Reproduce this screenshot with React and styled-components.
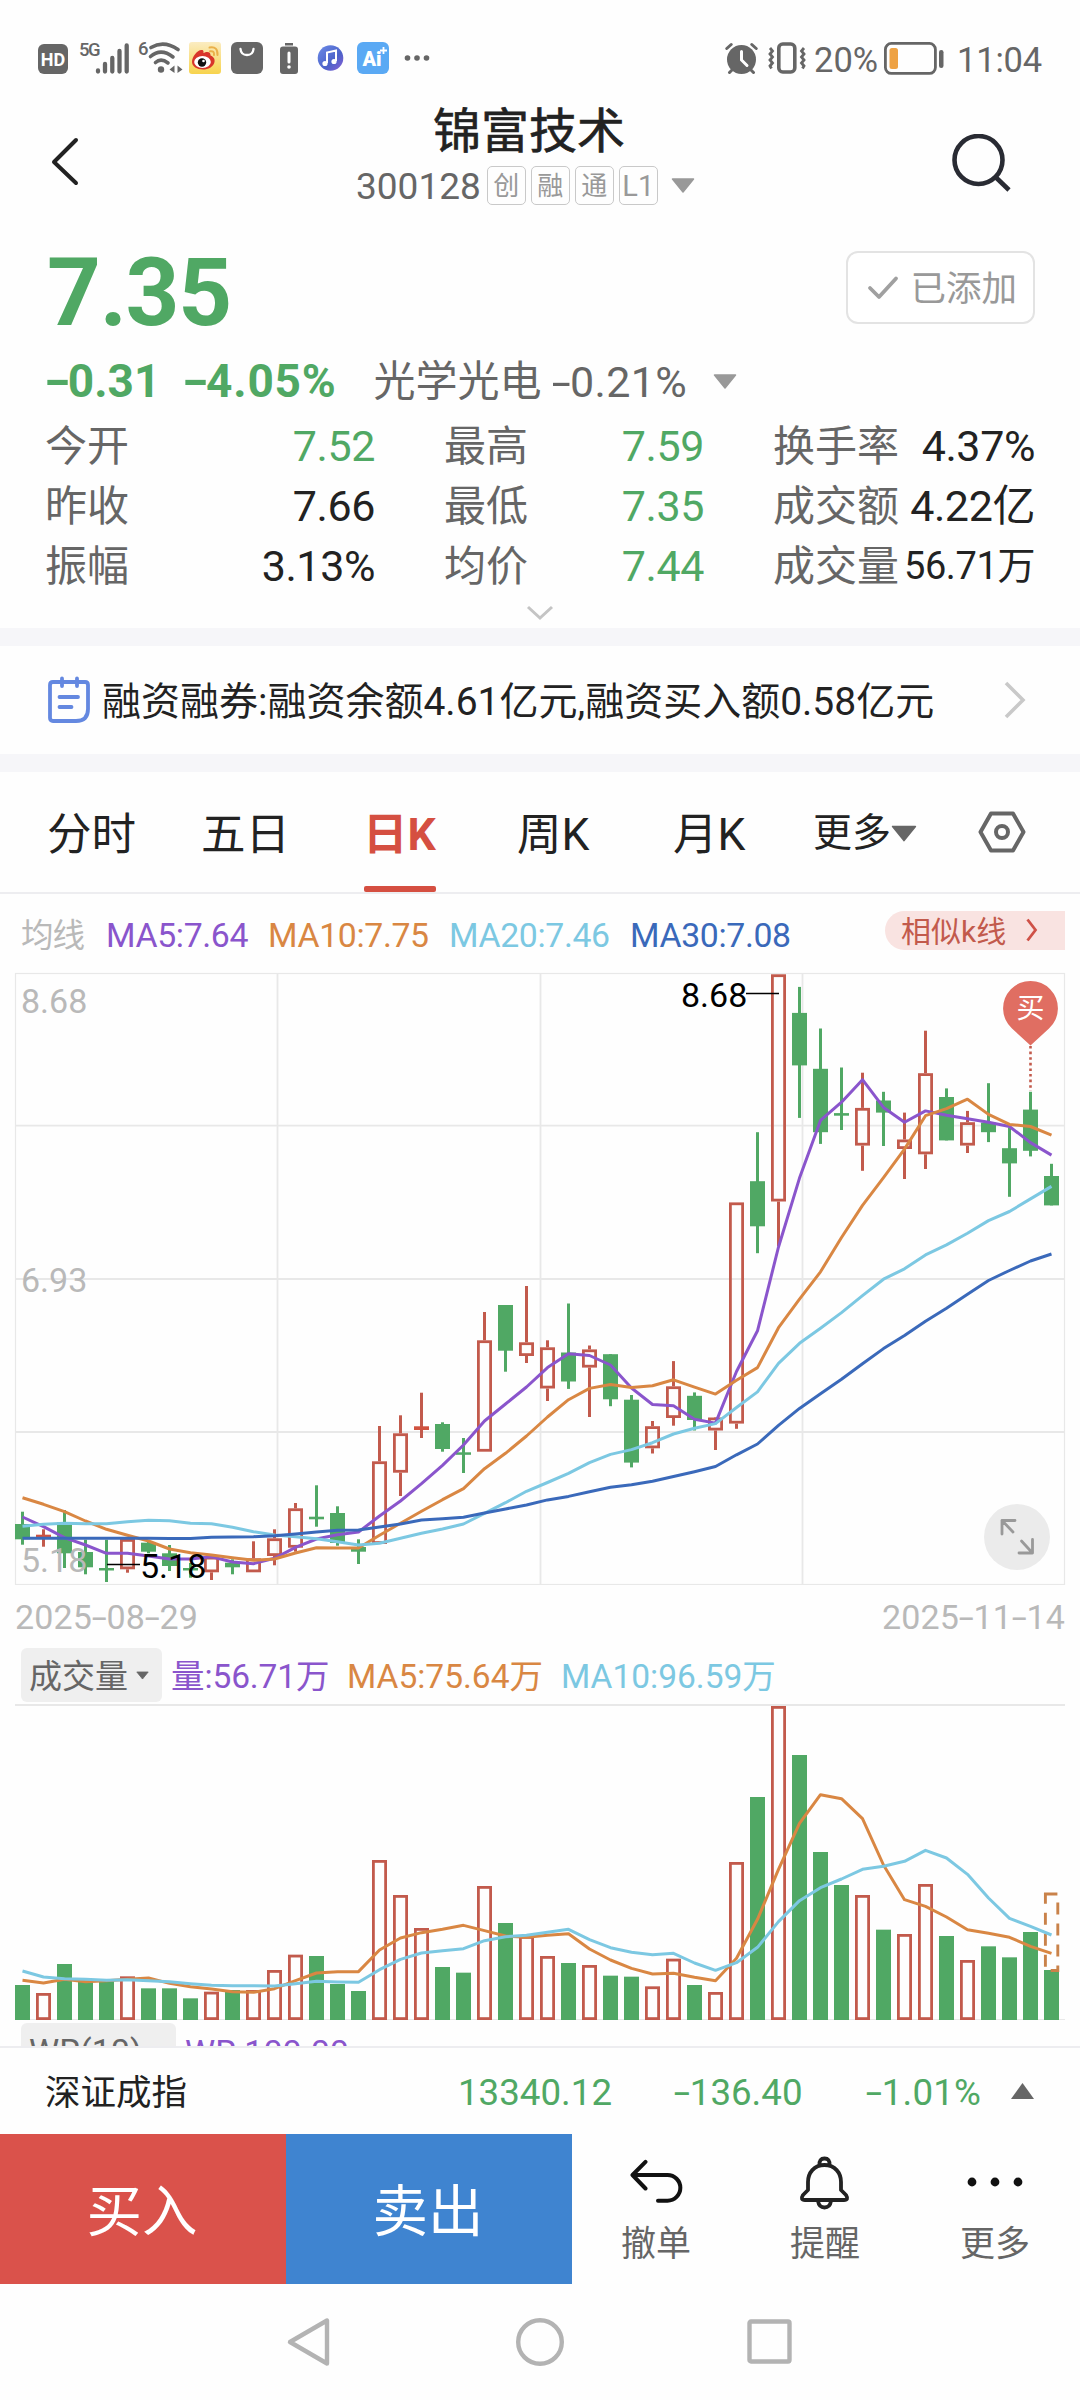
import React from "react";
import styled, { createGlobalStyle } from "styled-components";

const C = {
  green: "#50a864",
  red: "#c25a4c",
  tabRed: "#d54f41",
  ink: "#222222",
  gray: "#666666",
  light: "#999999",
  pale: "#b9b9b9",
  grid: "#e8e8e8",
  purple: "#8a55cc",
  orange: "#d98743",
  cyan: "#7cc8e2",
  blue: "#3a69ba",
};

const Global = createGlobalStyle`
  * { box-sizing: border-box; }
  body {
    margin: 0;
    background: #fefefe;
    font-family: Roboto, "Noto Sans CJK SC", sans-serif;
  }
  svg { display: block; flex: none; }
`;

const Phone = styled.div`
  width: 1080px;
  height: 2400px;
  display: flex;
  flex-direction: column;
  overflow: hidden;
`;

const Text = styled.span`
  font-size: ${(p) => p.$size}px;
  line-height: 1.2;
  padding-top: ${(p) => p.$pt ?? 3}px;
  color: ${(p) => p.$color || C.ink};
  font-weight: ${(p) => p.$weight || 400};
  letter-spacing: ${(p) => p.$ls || 0}px;
  -webkit-text-stroke: ${(p) => p.$stroke || 0}px;
  white-space: nowrap;
  margin-left: ${(p) => p.$ml || 0}px;
`;

const Dash = styled.span`
  display: inline-block;
  width: 0.43em;
  letter-spacing: 0;
  text-align: center;
  transform: scaleX(1.6);
`;

/* Draws hyphens in numbers and dates as wide, figure-like dashes. */
const Num = ({ children }) =>
  children.split("-").map((part, i) => (
    <React.Fragment key={i}>
      {i > 0 && <Dash>-</Dash>}
      {part}
    </React.Fragment>
  ));

const Gap = styled.span`
  width: ${(p) => p.$w}px;
  flex: none;
`;

/* ---------- status bar ---------- */
const StatusBar = styled.div`
  height: 88px;
  padding: 28px 38px 0 38px;
  display: flex;
  align-items: center;
  justify-content: space-between;
`;
const StatusGroup = styled.div`
  display: flex;
  align-items: center;
  height: 60px;
`;
const Badge = styled.div`
  width: 30px;
  height: 30px;
  margin-top: 2px;
  border-radius: 6px;
  background: ${C.gray};
  color: #fff;
  font-size: 18px;
  font-weight: 700;
  line-height: 31px;
  text-align: center;
`;
const NetLabel = styled.span`
  align-self: flex-start;
  margin: ${(p) => p.$top}px 0 0 ${(p) => p.$ml}px;
  width: ${(p) => p.$w}px;
  font-size: 18.5px;
  line-height: 18px;
  font-weight: 500;
  letter-spacing: -1.5px;
  color: ${C.gray};
`;
const AiBadge = styled.div`
  width: 32px;
  height: 32px;
  margin-left: 13px;
  padding-right: 2px;
  border-radius: 6px;
  background: #5aa9f4;
  color: #fff;
  font-size: 20px;
  font-weight: 900;
  line-height: 34px;
  text-align: center;
  position: relative;
`;
const Spark = styled.svg`
  position: absolute;
  right: 2px;
  top: 5px;
`;

/* ---------- header ---------- */
const Header = styled.header`
  height: 144px;
  display: flex;
  justify-content: space-between;
  padding: 0 68px 0 50px;
`;
const HeaderSide = styled.div`
  width: 112px;
  padding-top: ${(p) => p.$top}px;
  display: flex;
  justify-content: ${(p) => (p.$right ? "flex-end" : "flex-start")};
`;
const HeaderMid = styled.div`
  flex: 1;
  display: flex;
  flex-direction: column;
  padding-top: 12px;
`;
const TitleRow = styled.div`
  height: 61px;
  display: flex;
  align-items: center;
  padding-left: 271px;
`;
const CodeRow = styled.div`
  height: 48px;
  display: flex;
  align-items: center;
  padding-left: 194px;
`;
const Tag = styled.span`
  width: 39px;
  height: 39px;
  margin-right: 5px;
  border: 1.5px solid #c9c9c9;
  border-radius: 5px;
  color: ${C.light};
  font-size: ${(p) => p.$size || 26}px;
  line-height: 39px;
  text-align: center;
`;
const Tags = styled.div`
  display: flex;
  margin: 1px 8px 0 6px;
`;

/* ---------- quote ---------- */
const Quote = styled.section`
  height: 396px;
  padding: 0 45px 0 45px;
`;
const PriceRow = styled.div`
  height: 119px;
  display: flex;
  align-items: center;
  justify-content: space-between;
`;
const AddedButton = styled.button`
  width: 189px;
  height: 73px;
  margin: -8px 0 0;
  padding: 0 16px 0 19px;
  border: 2px solid #e3e3e3;
  border-radius: 12px;
  background: #fff;
  display: flex;
  align-items: center;
  justify-content: space-between;
  font-family: inherit;
`;
const ChangeRow = styled.div`
  height: 60px;
  margin-bottom: 4px;
  display: flex;
  align-items: center;
`;
const Stats = styled.div`
  display: grid;
  grid-template-columns: 330px 260px 262px;
  column-gap: 69px;
  grid-auto-rows: 60px;
`;
const Stat = styled.div`
  display: flex;
  align-items: center;
  justify-content: space-between;
`;
const ExpandRow = styled.div`
  display: flex;
  justify-content: center;
  padding-top: 10px;
`;
const Band = styled.div`
  height: 18px;
  background: #f6f6f9;
`;

/* ---------- notice ---------- */
const Notice = styled.section`
  height: 108px;
  padding: 0 53px 0 47px;
  display: flex;
  align-items: center;
`;
const NoticeText = styled.div`
  flex: 1;
  padding: 4px 0 0 11px;
`;

/* ---------- tabs ---------- */
const Tabs = styled.nav`
  height: 122px;
  padding: 0 54px 0 47px;
  border-bottom: 2px solid #ededf0;
  display: flex;
`;
const Tab = styled.div`
  width: ${(p) => p.$w}px;
  height: 120px;
  display: flex;
  flex-direction: column;
  align-items: flex-start;
  justify-content: space-between;
  padding-top: ${(p) => p.$top || 36}px;
`;
const TabLabel = styled.div`
  display: flex;
  align-items: center;
  line-height: 54px;
  margin-left: ${(p) => (p.$active ? -2 : 0)}px;
  font-size: ${(p) => p.$size || 44.5}px;
  color: ${(p) => (p.$active ? C.tabRed : C.ink)};
  font-weight: ${(p) => (p.$active ? 700 : 400)};
`;
const Underline = styled.div`
  width: 72px;
  height: 6px;
  margin-left: -1px;
  border-radius: 2px;
  background: ${C.tabRed};
`;

/* ---------- legends ---------- */
const Legend = styled.div`
  height: 78px;
  padding: 2px 15px 0 21px;
  display: flex;
  align-items: center;
`;
const LegendItem = styled.span`
  width: ${(p) => p.$w}px;
  font-size: ${(p) => p.$size || 33.5}px;
  letter-spacing: ${(p) => p.$ls || 0}px;
  color: ${(p) => p.$color};
  white-space: nowrap;
  line-height: 40px;
  padding-top: 4px;
`;
const Similar = styled.div`
  width: 180px;
  height: 39px;
  margin: -8px 0 0 auto;
  padding: 0 27px 0 16px;
  border-radius: 20px 0 0 20px;
  background: #f9e3e1;
  display: flex;
  align-items: center;
  justify-content: space-between;
`;
const Dates = styled.div`
  height: 63px;
  padding: 0 15px 0 15px;
  display: flex;
  justify-content: space-between;
  align-items: center;
`;
const VolLegend = styled.div`
  height: 56px;
  padding: 0 21px;
  display: flex;
  align-items: flex-start;
`;
const Selector = styled.div`
  width: ${(p) => p.$w}px;
  height: 54px;
  border-radius: 6px;
  background: #efefef;
  padding-left: 8px;
  display: flex;
  align-items: center;
  gap: 8px;
`;
const VolItems = styled.div`
  height: 54px;
  margin-left: ${(p) => p.$ml}px;
  display: flex;
  align-items: center;
`;
const NextPanel = styled.div`
  height: 25px;
  padding: 2px 21px 0;
  overflow: hidden;
  display: flex;
  align-items: flex-start;
`;

/* ---------- bottom ---------- */
const IndexBar = styled.div`
  height: 88px;
  border-top: 2px solid #ededf0;
  padding: 0 45px;
  display: grid;
  grid-template-columns: 413px 216px 192px 145px 22px;
  align-items: center;
`;
const ActionBar = styled.div`
  height: 150px;
  display: flex;
`;
const Trade = styled.div`
  width: 286px;
  padding-right: 2px;
  background: ${(p) => p.$bg};
  color: #fff;
  font-size: 55.5px;
  line-height: 157px;
  text-align: center;
`;
const Tools = styled.div`
  flex: 1;
  display: grid;
  grid-template-columns: 168px 170px 170px;
`;
const Tool = styled.div`
  display: flex;
  flex-direction: column;
  align-items: center;
  padding-top: 20px;
`;
const ToolIcon = styled.div`
  height: 56px;
  margin-bottom: 11px;
  display: flex;
  align-items: center;
`;
const NavBar = styled.div`
  flex: 1;
  display: flex;
  justify-content: space-between;
  align-items: center;
  padding: 0 287px 0 286px;
`;
const HomeIcon = styled.svg`
  margin-left: 3px;
`;

const ChartText = styled.text`
  font-size: 34px;
  fill: ${(p) => p.$fill};
`;

/* [up?, high, bodyTop, bodyBottom, low] */
const candles = [
  [0, 1511.7, 1524, 1539.3, 1544.7], [1, 1529.3, 1534.7, 1537, 1546.7],
  [0, 1510, 1522.3, 1553.3, 1568], [0, 1539.7, 1552, 1567.3, 1574.3],
  [0, 1539.7, 1568, 1570.5, 1582], [1, 1539, 1539, 1569.3, 1572.7],
  [0, 1541.7, 1542.7, 1551.7, 1553.3], [0, 1545, 1553.3, 1566, 1571],
  [0, 1563, 1568, 1570.5, 1577.7], [1, 1556.7, 1556.7, 1572.3, 1580],
  [0, 1559.3, 1562.7, 1567.3, 1574.3], [1, 1541.3, 1558.3, 1572.3, 1572.3],
  [1, 1529.3, 1538.3, 1556, 1565.3], [1, 1503, 1508.3, 1547.7, 1551.7],
  [0, 1485.3, 1516.7, 1519.3, 1526.7], [0, 1506.3, 1513, 1543, 1545.7],
  [0, 1539.3, 1547, 1551.7, 1564], [1, 1426, 1461.3, 1544, 1544],
  [1, 1415.3, 1433.3, 1472.7, 1496], [1, 1392.7, 1426.3, 1430, 1438],
  [0, 1422.3, 1424, 1449, 1451.7], [0, 1438, 1452.3, 1454.7, 1473],
  [1, 1312, 1340.3, 1451.7, 1451.7], [0, 1305, 1305, 1350.7, 1371.7],
  [1, 1286, 1342.3, 1356, 1363], [1, 1340.3, 1347.3, 1388.5, 1401],
  [0, 1303.5, 1352.5, 1381.5, 1388.9], [1, 1345.5, 1349.4, 1367.6, 1417],
  [0, 1354.2, 1354.2, 1399.3, 1406.2], [0, 1395, 1399.7, 1462.6, 1467.4],
  [1, 1421, 1426.2, 1448.3, 1453.5], [1, 1361.1, 1386.3, 1418, 1425.7],
  [0, 1392.4, 1395.8, 1420, 1430.5], [1, 1417, 1417.5, 1430.5, 1450],
  [1, 1202.4, 1202.4, 1423.6, 1428.8], [0, 1132.2, 1181.2, 1226.3, 1253.2],
  [1, 974.3, 974.3, 1201.5, 1246], [0, 986.9, 1012.9, 1065.4, 1117.9],
  [0, 1028.5, 1068.8, 1132.2, 1143.9], [0, 1067.5, 1113.1, 1115.7, 1130],
  [1, 1072.7, 1107.9, 1145.6, 1170.8], [0, 1091.8, 1100.5, 1112.6, 1146],
  [1, 1112.6, 1139.5, 1149, 1179], [1, 1030.7, 1073.2, 1154.3, 1169],
  [0, 1088.4, 1097, 1140.4, 1140.4], [1, 1110.9, 1122.2, 1145.6, 1153],
  [0, 1083.2, 1122.6, 1132.2, 1142.1], [0, 1127.4, 1148.2, 1163.4, 1196.8],
  [0, 1091.8, 1109.6, 1150.8, 1156.4], [0, 1163.8, 1176, 1205.4, 1205.4],
];

const ma5 = [1517, 1526.7, 1537.7, 1545, 1553.3, 1553.3, 1556, 1559, 1559, 1556.7, 1562, 1563.7, 1558.3, 1547.3, 1539, 1534.7, 1532, 1516, 1501, 1483.7, 1465.3, 1445, 1421, 1404, 1387, 1367.6, 1353.8, 1355.5, 1365, 1388, 1404.5, 1405.8, 1419.2, 1423.1, 1371.5, 1330.8, 1247, 1178.1, 1120.4, 1102.2, 1079.7, 1107.4, 1122.2, 1110.9, 1115.2, 1118.7, 1122.2, 1126.5, 1142.6, 1155.1];
const ma10 = [1497.7, 1504.3, 1511.7, 1521, 1529.3, 1535.3, 1541, 1549, 1552.7, 1555, 1557.7, 1560.3, 1559, 1553, 1547.7, 1548, 1548, 1535.3, 1523.3, 1511.3, 1499.7, 1488.7, 1468.7, 1453.3, 1436, 1417, 1399.7, 1388.4, 1384.5, 1387.6, 1385.8, 1379.8, 1387.1, 1394.1, 1380.2, 1367.6, 1327.7, 1299.1, 1271.8, 1237.5, 1205.4, 1177.7, 1149.1, 1115.7, 1108.7, 1099.2, 1114.4, 1124.4, 1126.5, 1135.2];
const ma20 = [1526.3, 1524.3, 1523.3, 1523.7, 1523.7, 1521.7, 1520.3, 1520.7, 1523.3, 1523.7, 1527.3, 1531.7, 1535, 1536.7, 1538.7, 1541.7, 1545, 1543.3, 1538.3, 1533.3, 1529, 1524, 1513.3, 1502.7, 1491.3, 1482.5, 1473.4, 1462.6, 1454.4, 1449.6, 1442.7, 1434, 1428.3, 1423.6, 1407.5, 1391.9, 1363.3, 1343.3, 1328.2, 1312.6, 1295.6, 1279.2, 1268.8, 1254.9, 1244.9, 1233.2, 1220.6, 1211.5, 1198.9, 1186.4];
const ma30 = [1538.3, 1538.3, 1538.3, 1538.3, 1538.3, 1538.3, 1538.3, 1538.6, 1538.6, 1537.3, 1537, 1536.7, 1535.7, 1534, 1532, 1530.3, 1530, 1527, 1524, 1520, 1518.7, 1517.3, 1513, 1509, 1505, 1499.9, 1496.4, 1491.7, 1487.3, 1484.7, 1481.3, 1476.5, 1471.7, 1466.5, 1454.8, 1444, 1425.3, 1408.4, 1393.7, 1379.3, 1363.7, 1348.6, 1335.5, 1321.2, 1308.2, 1294.3, 1280.5, 1270.5, 1261, 1254];

const volumes = [105, 81, 168, 118, 118, 131, 95, 95, 65, 85, 90, 90, 150, 196, 192, 108, 87, 480, 375, 276, 159, 142, 402, 291, 252, 192, 171, 165, 133, 130, 101, 184, 105, 84, 474, 669, 942, 795, 504, 405, 375, 271, 258, 408, 252, 180, 221, 188, 264, 150];
const vol5 = [119, 111, 122, 115, 118, 122, 126, 110, 100, 93, 85, 83, 94, 118, 141, 145, 145, 210, 246, 262, 272, 284, 268, 252, 248, 254, 259, 213, 180, 155, 138, 140, 128, 118, 185, 302, 452, 590, 676, 664, 604, 465, 361, 341, 309, 271, 260, 248, 221, 200];
const vol10 = [147, 129, 124, 122, 119, 121, 118, 115, 109, 104, 103, 103, 102, 109, 116, 114, 113, 151, 182, 201, 208, 214, 238, 250, 254, 263, 272, 241, 217, 203, 196, 200, 171, 149, 172, 218, 295, 358, 397, 423, 452, 461, 476, 509, 486, 437, 366, 305, 281, 255];

const cx = (i) => 22.5 + i * 21;
const points = (ys, f = (y) => y) => ys.map((y, i) => `${cx(i)},${f(y)}`).join(" ");
const volY = (v) => 2020 - v / 3;

const Line = ({ pts, color }) => (
  <polyline points={pts} fill="none" stroke={color} strokeWidth="3" strokeLinejoin="round" />
);

function Candle({ i, d: [up, hi, top, bot, lo] }) {
  const x = cx(i);
  const h = Math.max(bot - top, 2.5);
  if (!up || h < 6) {
    const fill = up ? "#d0523f" : C.green;
    return (
      <g>
        <line x1={x} x2={x} y1={hi} y2={lo} stroke={up ? C.red : C.green} strokeWidth="3" />
        <rect x={x - 7.5} y={top} width="15" height={h} fill={fill} />
      </g>
    );
  }
  return (
    <g stroke={C.red} fill="none">
      <line x1={x} x2={x} y1={hi} y2={top} strokeWidth="3" />
      <line x1={x} x2={x} y1={bot} y2={lo} strokeWidth="3" />
      <rect x={x - 6.1} y={top + 1.4} width="12.2" height={h - 2.8} strokeWidth="2.8" />
    </g>
  );
}

function PriceChart() {
  return (
    <svg width="1080" height="613" viewBox="0 972 1080 613">
      <g stroke={C.grid} strokeWidth="1.8" fill="none">
        <rect x="15.5" y="973.5" width="1049" height="611" strokeWidth="1.2" />
        {[1125.7, 1279, 1432].map((y) => <line key={y} x1="15" x2="1065" y1={y} y2={y} />)}
        {[277.5, 540.5, 802.5].map((x) => <line key={x} x1={x} x2={x} y1="973" y2="1584" />)}
      </g>
      {candles.map((d, i) => <Candle key={i} i={i} d={d} />)}
      <Line pts={points(ma5)} color={C.purple} />
      <Line pts={points(ma10)} color={C.orange} />
      <Line pts={points(ma20)} color={C.cyan} />
      <Line pts={points(ma30)} color={C.blue} />
      <ChartText x="21" y="1013" $fill={C.pale}>8.68</ChartText>
      <ChartText x="21" y="1292" $fill={C.pale}>6.93</ChartText>
      <ChartText x="21" y="1572" $fill={C.pale}>5.18</ChartText>
      <ChartText x="681" y="1007" $fill="#000">8.68</ChartText>
      <ChartText x="140" y="1578" $fill="#000">5.18</ChartText>
      <line x1="746" x2="779" y1="993.5" y2="993.5" stroke="#000" strokeWidth="1.5" />
      <line x1="107" x2="140" y1="1564.5" y2="1564.5" stroke="#000" strokeWidth="1.5" />
      <line x1="1030.5" x2="1030.5" y1="1046" y2="1091" stroke={C.red} strokeWidth="2.6" strokeDasharray="2.6 3" />
      <path d="M1030.5 1045.5L1012 1028.5A27.4 27.4 0 1 1 1049 1028.5Z" fill="#e06e62" />
      <text x="1030.5" y="1018" fontSize="28" fill="#fff" textAnchor="middle">买</text>
      <circle cx="1017" cy="1537" r="33" fill="#ebebeb" />
      <g stroke={C.light} strokeWidth="2.8" fill="none" strokeLinecap="round" strokeLinejoin="round">
        <path d="M1002 1534V1520.5H1015M1002 1520.5L1013 1532" />
        <path d="M1032.5 1539.5V1553H1019M1032.5 1553L1021.5 1541" />
      </g>
    </svg>
  );
}

function VolumeChart() {
  return (
    <svg width="1080" height="317" viewBox="0 1704 1080 317">
      <rect x="15" y="1704" width="1050" height="2" fill={C.grid} />
      <rect x="15" y="2019" width="1050" height="1" fill={C.grid} />
      {volumes.map((v, i) => {
        const y = volY(v);
        return candles[i][0] ? (
          <rect key={i} x={cx(i) - 6.1} y={y + 1.4} width="12.2" height={2020 - y - 2.8} fill="none" stroke={C.red} strokeWidth="2.8" />
        ) : (
          <rect key={i} x={cx(i) - 7.5} y={y} width="15" height={2020 - y} fill={C.green} />
        );
      })}
      <rect x="1045.4" y="1894" width="12.4" height="76.5" fill="none" stroke="#c9824a" strokeWidth="2.9" strokeDasharray="12 9" />
      <Line pts={points(vol5, volY)} color={C.orange} />
      <Line pts={points(vol10, volY)} color={C.cyan} />
    </svg>
  );
}

const TriDown = ({ w = 24, h = 15, color = C.light }) => (
  <svg width={w} height={h} viewBox="0 0 24 15">
    <path d="M1.5 1H22.5L12 14Z" fill={color} stroke={color} strokeLinejoin="round" strokeWidth="1.5" />
  </svg>
);

const Signal = () => (
  <svg width="36" height="34" viewBox="0 0 36 34">
    <g stroke={C.gray} strokeWidth="4.3" strokeLinecap="round">
      <path d="M3 29.5V30.5M10 23V30.5M17.3 17V30.5M24.5 10V30.5M31.7 4.5V30.5" />
    </g>
  </svg>
);

const Wifi = () => (
  <svg width="36" height="34" viewBox="0 0 36 34">
    <g fill="none" stroke={C.gray} strokeWidth="3.6" strokeLinecap="round">
      <path d="M4 6.5Q17 -1 31 8.5" />
      <path d="M3.5 15.5Q14 6.5 26 16" />
      <path d="M8.5 21.5Q14 16.5 21 22" />
    </g>
    <circle cx="14" cy="28.5" r="3.2" fill={C.gray} />
    <path d="M27.5 24.5V32L22.5 28.5ZM30.5 24.5V32L35.5 28.5Z" fill={C.gray} />
  </svg>
);

const Weibo = () => (
  <svg width="32" height="32" viewBox="0 0 32 32">
    <defs>
      <linearGradient id="wb" x1="0" y1="0" x2="0" y2="1">
        <stop offset="0" stopColor="#fbecc2" />
        <stop offset="1" stopColor="#f7d34c" />
      </linearGradient>
    </defs>
    <rect width="32" height="32" rx="3" fill="url(#wb)" />
    <path d="M3 20C3 15 8 8 12.5 8C15 8 14.5 10 14.5 11C17 9.5 22 9 21.5 13.5C25 15 26 17 25.5 20C24.5 25 19 27.5 14 27.5C8 27.5 3 24.5 3 20Z" fill="#d8352a" />
    <ellipse cx="13.5" cy="20" rx="8.3" ry="6" fill="#fff" />
    <circle cx="13" cy="20.5" r="4.2" fill="#111" />
    <circle cx="14.5" cy="19" r="1.3" fill="#fff" />
    <path d="M20.5 5.5Q29 4 28.5 13M21 9.3Q25.5 8.5 25 13" fill="none" stroke="#eab04a" strokeWidth="2" strokeLinecap="round" />
  </svg>
);

const Bag = () => (
  <svg width="32" height="32" viewBox="0 0 32 32">
    <rect width="32" height="32" rx="6" fill={C.gray} />
    <path d="M9.5 7Q10 13 16 13T22.5 7" fill="none" stroke="#fff" strokeWidth="2.3" strokeLinecap="round" />
  </svg>
);

const LowBattery = () => (
  <svg width="18" height="31" viewBox="0 0 18 31">
    <rect x="5" width="8" height="2.5" fill={C.gray} />
    <rect y="3.5" width="18" height="27.5" rx="3" fill={C.gray} />
    <path d="M9 10V19" stroke="#fff" strokeWidth="3" strokeLinecap="round" />
    <circle cx="9" cy="24" r="1.8" fill="#fff" />
  </svg>
);

const Music = () => (
  <svg width="27" height="28" viewBox="0 0 27 28">
    <defs>
      <linearGradient id="mu" x1="0" y1="0" x2="1" y2="1">
        <stop offset="0" stopColor="#6c8ce8" />
        <stop offset="0.6" stopColor="#4c62c9" />
        <stop offset="1" stopColor="#8b5fd6" />
      </linearGradient>
    </defs>
    <circle cx="13.5" cy="14" r="12.8" fill="url(#mu)" />
    <path d="M10 19V8.5L19 6.5V17" fill="none" stroke="#fff" strokeWidth="2" />
    <circle cx="8" cy="19.5" r="2.6" fill="#fff" />
    <circle cx="17" cy="17.5" r="2.6" fill="#fff" />
  </svg>
);

const Dots = () => (
  <svg width="26" height="8" viewBox="0 0 26 8">
    <g fill={C.gray}>
      <circle cx="3.5" cy="4" r="2.8" />
      <circle cx="13" cy="4" r="2.8" />
      <circle cx="22.5" cy="4" r="2.8" />
    </g>
  </svg>
);

const Alarm = () => (
  <svg width="34" height="33" viewBox="0 0 34 33">
    <circle cx="16.5" cy="17.5" r="14.5" fill={C.gray} />
    <path d="M1.8 6.5L6.2 2.5M31.2 6.5L26.8 2.5M4.5 30.5L7 28M28.5 30.5L26 28" stroke={C.gray} strokeWidth="3" strokeLinecap="round" />
    <path d="M16.5 9.5V18L22 23.5" fill="none" stroke="#fff" strokeWidth="3" strokeLinecap="round" />
  </svg>
);

const Vibrate = () => (
  <svg width="38" height="32" viewBox="0 0 38 32">
    <g fill="none" stroke={C.gray}>
      <rect x="10.8" y="2" width="16" height="28" rx="4" strokeWidth="3.6" />
      <path d="M2 6L4.500 9L2 12L4.500 15L2 18L4.500 21L2 24L3.500 26.500" strokeWidth="2.800" />
      <path d="M36 6L33.500 9L36 12L33.500 15L36 18L33.500 21L36 24L34.500 26.500" strokeWidth="2.800" />
    </g>
  </svg>
);

const Battery = () => (
  <svg width="60" height="33" viewBox="0 0 60 33">
    <rect x="1.4" y="1.4" width="50" height="30" rx="6" fill="none" stroke={C.gray} strokeWidth="2.8" />
    <rect x="5.5" y="6" width="8.5" height="21" rx="2.5" fill="#eea244" />
    <rect x="55" y="8" width="4.5" height="18" rx="2.2" fill={C.gray} />
  </svg>
);

const legend = [
  ["均线", C.pale, 85, 32.5, -1],
  ["MA5:7.64", C.purple, 162, 33.8, -0.35],
  ["MA10:7.75", C.orange, 181, 33.8, -0.35],
  ["MA20:7.46", C.cyan, 181, 33.8, -0.35],
  ["MA30:7.08", C.blue, 170, 33.8, -0.35],
];

const stats = [
  ["今开", "7.52", C.green], ["最高", "7.59", C.green], ["换手率", "4.37%"],
  ["昨收", "7.66"], ["最低", "7.35", C.green], ["成交额", "4.22亿"],
  ["振幅", "3.13%"], ["均价", "7.44", C.green], ["成交量", "56.71万", C.ink, 38],
];

export default function App() {
  return (
    <Phone>
      <Global />
      <StatusBar>
        <StatusGroup>
          <Badge>HD</Badge>
          <NetLabel $ml={11} $w={16} $top={13}>5G</NetLabel>
          <Signal />
          <NetLabel $ml={7} $w={9} $top={12}>6</NetLabel>
          <Wifi />
          <Gap $w={6} /><Weibo />
          <Gap $w={10} /><Bag />
          <Gap $w={17} /><LowBattery />
          <Gap $w={19} /><Music />
          <AiBadge>
            Ai
            <Spark width="7" height="7" viewBox="0 0 7 7"><path d="M3.5 0V7M0 3.5H7" stroke="#fff" strokeWidth="1.8" /></Spark>
          </AiBadge>
          <Gap $w={15} /><Dots />
        </StatusGroup>
        <StatusGroup>
          <Alarm />
          <Gap $w={9} /><Vibrate />
          <Text $size={34.5} $color={C.gray} $ml={8} $pt={5}>20%</Text>
          <Gap $w={6} /><Battery />
          <Text $size={34.5} $color={C.gray} $ml={13} $pt={5} $ls={-0.2}>11:04</Text>
        </StatusGroup>
      </StatusBar>

      <Header>
        <HeaderSide $top={48}>
          <svg width="30" height="52" viewBox="0 0 30 52">
            <path d="M26 4L4 26L26 47" fill="none" stroke={C.ink} strokeWidth="4" strokeLinecap="round" strokeLinejoin="round" />
          </svg>
        </HeaderSide>
        <HeaderMid>
          <TitleRow><Text $size={48} $stroke={0.6} $pt={2}>锦富技术</Text></TitleRow>
          <CodeRow>
            <Text $size={37} $color={C.gray} $pt={4}>300128</Text>
            <Tags>
              <Tag>创</Tag><Tag>融</Tag><Tag>通</Tag><Tag $size={29}>L1</Tag>
            </Tags>
            <TriDown />
          </CodeRow>
        </HeaderMid>
        <HeaderSide $right $top={46}>
          <svg width="60" height="60" viewBox="0 0 60 60">
            <g fill="none" stroke="#292b33" strokeWidth="4.6">
              <circle cx="26.5" cy="26" r="24" />
              <path d="M43 42.5L57 56" />
            </g>
          </svg>
        </HeaderSide>
      </Header>

      <Quote>
        <PriceRow>
          <Text $size={94} $color={C.green} $weight={700} $ls={-1.3} $ml={2}>7.35</Text>
          <AddedButton>
            <svg width="32" height="26" viewBox="0 0 32 26">
              <path d="M3 13L12 22L29 3.5" fill="none" stroke="#a0a0a0" strokeWidth="3.8" strokeLinecap="round" strokeLinejoin="round" />
            </svg>
            <Text $size={35.5} $color={C.light} $pt={4}>已添加</Text>
          </AddedButton>
        </PriceRow>
        <ChangeRow>
          <Text $size={46} $color={C.green} $weight={700} $ml={3} $pt={2}><Num>-0.31</Num></Text>
          <Text $size={46} $color={C.green} $weight={700} $ml={26} $ls={0.8} $pt={2}><Num>-4.05%</Num></Text>
          <Text $size={42} $color={C.gray} $ml={37}>光学光电</Text>
          <Text $size={43} $color={C.gray} $ml={10} $ls={0.3}><Num>-0.21%</Num></Text>
          <Gap $w={26} />
          <TriDown />
        </ChangeRow>
        <Stats>
          {stats.map(([k, v, color, size]) => (
            <Stat key={k}>
              <Text $size={42} $color={C.gray} $pt={4}>{k}</Text>
              <Text $size={size || 43} $color={color || C.ink} $ls={-0.4} $pt={4}>{v}</Text>
            </Stat>
          ))}
        </Stats>
        <ExpandRow>
          <svg width="28" height="16" viewBox="0 0 28 16">
            <path d="M2 2L14 13L26 2" fill="none" stroke="#c4c4c4" strokeWidth="3" />
          </svg>
        </ExpandRow>
      </Quote>
      <Band />
      <Notice>
        <svg width="44" height="48" viewBox="0 0 44 48">
          <g fill="none" stroke="#6488e0" strokeWidth="3.8" strokeLinecap="round" strokeLinejoin="round">
            <path d="M6 6H38Q41 6 41 9V33Q41 45 29 45H6Q3 45 3 42V9Q3 6 6 6Z" />
            <path d="M15 2.5V10M30 2.5V10" />
            <path d="M12.5 21H31M12.5 31H24.5" />
          </g>
        </svg>
        <NoticeText>
          <Text $size={39}>融资融券:融资余额4.61亿元,融资买入额0.58亿元</Text>
        </NoticeText>
        <svg width="24" height="40" viewBox="0 0 24 40">
          <path d="M3 3L20 20L3 37" fill="none" stroke="#c9c9c9" strokeWidth="3.6" />
        </svg>
      </Notice>
      <Band />
      <Tabs>
        <Tab $w={154}><TabLabel>分时</TabLabel></Tab>
        <Tab $w={164}><TabLabel>五日</TabLabel></Tab>
        <Tab $w={152}><TabLabel $active>日K</TabLabel><Underline /></Tab>
        <Tab $w={156}><TabLabel>周K</TabLabel></Tab>
        <Tab $w={140}><TabLabel>月K</TabLabel></Tab>
        <Tab $w={165} $top={34}>
          <TabLabel $size={39}>更多<TriDown color={C.gray} w={26} h={17} /></TabLabel>
        </Tab>
        <Tab $w={48} $top={39}>
          <svg width="48" height="42" viewBox="0 0 48 42">
            <g fill="none" stroke={C.gray} strokeWidth="4">
              <path d="M13 2.5H35L45.5 21L35 39.5H13L2.5 21Z" strokeLinejoin="round" />
              <circle cx="24" cy="21" r="6" />
            </g>
          </svg>
        </Tab>
      </Tabs>
      <Legend>
        {legend.map(([t, c, w, s, ls]) => (
          <LegendItem key={t} $color={c} $w={w} $size={s} $ls={ls}>{t}</LegendItem>
        ))}
        <Similar>
          <Text $size={30} $color={C.red}>相似k线</Text>
          <svg width="12" height="24" viewBox="0 0 12 24">
            <path d="M1.5 1.5L9.5 12L1.5 22.5" fill="none" stroke="#cf5147" strokeWidth="2.8" />
          </svg>
        </Similar>
      </Legend>
      <PriceChart />
      <Dates>
        <Text $size={34} $color={C.pale} $pt={1} $ls={0.1}><Num>2025-08-29</Num></Text>
        <Text $size={34} $color={C.pale} $pt={1} $ls={0.1}><Num>2025-11-14</Num></Text>
      </Dates>
      <VolLegend>
        <Selector $w={141}>
          <Text $size={33} $color={C.gray}>成交量</Text>
          <TriDown w={13} h={9} color={C.gray} />
        </Selector>
        <VolItems $ml={9}>
          <LegendItem $w={176} $color={C.purple} $ls={-0.1}>量:56.71万</LegendItem>
          <LegendItem $w={214} $color={C.orange}>MA5:75.64万</LegendItem>
          <LegendItem $w={220} $color={C.cyan}>MA10:96.59万</LegendItem>
        </VolItems>
      </VolLegend>
      <VolumeChart />
      <NextPanel>
        <Selector $w={155}>
          <Text $size={34} $color={C.gray}>WR(10)</Text>
        </Selector>
        <VolItems $ml={9}>
          <LegendItem $w={170} $color={C.purple} $size={34}>WR:100.00</LegendItem>
        </VolItems>
      </NextPanel>
      <IndexBar>
        <Text $size={35.5} $pt={4}>深证成指</Text>
        <Text $size={36.7} $color={C.green} $pt={4}>13340.12</Text>
        <Text $size={36.7} $color={C.green} $pt={4}><Num>-136.40</Num></Text>
        <Text $size={36.7} $color={C.green} $pt={4} $ls={0.2}><Num>-1.01%</Num></Text>
        <svg width="23" height="16" viewBox="0 0 23 16"><path d="M0 16L11.5 0L23 16Z" fill={C.gray} /></svg>
      </IndexBar>
      <ActionBar>
        <Trade $bg="#da524b">买入</Trade>
        <Trade $bg="#3f84d0">卖出</Trade>
        <Tools>
          <Tool>
            <ToolIcon>
              <svg width="54" height="46" viewBox="0 0 54 46">
                <path d="M16.5 2.8L3.5 16L16.5 29.5M4 16H38.5A12.8 12.8 0 0 1 38.5 41.7H29" fill="none" stroke="#111" strokeWidth="4" strokeLinecap="round" strokeLinejoin="round" />
              </svg>
            </ToolIcon>
            <Text $size={35} $color={C.gray}>撤单</Text>
          </Tool>
          <Tool>
            <ToolIcon>
              <svg width="52" height="56" viewBox="0 -2 52 56">
                <g fill="none" stroke={C.ink} strokeWidth="3.8" strokeLinejoin="round">
                  <path d="M25.5 9C15 9 9 17 9 26V34L4 39Q1 44 6 44H45Q50 44 47 39L42 34V26C42 17 36 9 25.5 9Z" />
                  <path d="M20.5 9Q20 2.5 25.5 2.5T30.5 9M19 45Q20 51.5 25.5 51.5T32 45" />
                </g>
              </svg>
            </ToolIcon>
            <Text $size={35} $color={C.gray}>提醒</Text>
          </Tool>
          <Tool>
            <ToolIcon>
              <svg width="56" height="12" viewBox="0 0 56 12">
                <g fill="#111">
                  <circle cx="5" cy="6" r="4.4" />
                  <circle cx="28" cy="6" r="4.4" />
                  <circle cx="51" cy="6" r="4.4" />
                </g>
              </svg>
            </ToolIcon>
            <Text $size={35} $color={C.gray}>更多</Text>
          </Tool>
        </Tools>
      </ActionBar>
      <NavBar>
        <svg width="44" height="50" viewBox="0 0 44 50"><path d="M41 3.5V46.5L4 25Z" fill="none" stroke="#b3b3b3" strokeWidth="4.4" strokeLinejoin="round" /></svg>
        <HomeIcon width="50" height="50" viewBox="0 0 50 50"><circle cx="25" cy="25" r="21.8" fill="none" stroke="#b3b3b3" strokeWidth="4.4" /></HomeIcon>
        <svg width="46" height="46" viewBox="0 0 46 46"><rect x="2.5" y="2.5" width="40" height="40" rx="1.5" fill="none" stroke="#b3b3b3" strokeWidth="4.4" /></svg>
      </NavBar>
    </Phone>
  );
}
